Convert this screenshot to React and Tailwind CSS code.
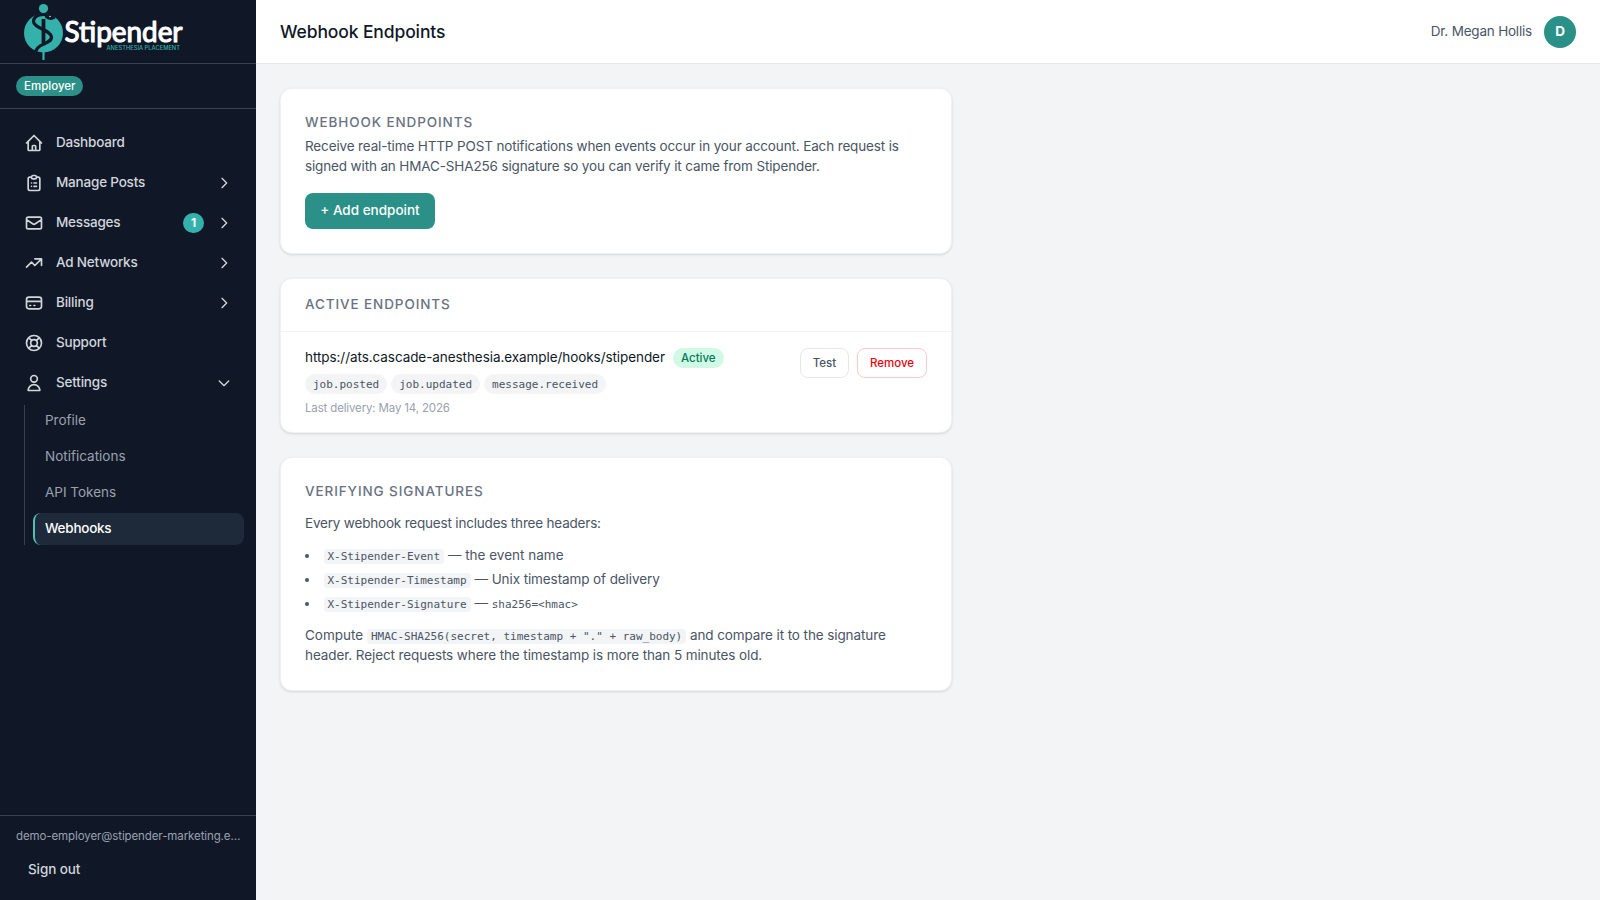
import React from 'react'

const icons = {
  home: 'M3 12l2-2m0 0l7-7 7 7M5 10v10a1 1 0 001 1h3m10-11l2 2m-2-2v10a1 1 0 01-1 1h-3m-6 0a1 1 0 001-1v-4a1 1 0 011-1h2a1 1 0 011 1v4a1 1 0 001 1m-6 0h6',
  clipboard:
    'M9 5H7a2 2 0 00-2 2v12a2 2 0 002 2h10a2 2 0 002-2V7a2 2 0 00-2-2h-2M9 5a2 2 0 002 2h2a2 2 0 002-2M9 5a2 2 0 012-2h2a2 2 0 012 2m-3 7h3m-3 4h3m-6-4h.01M9 16h.01',
  mail: 'M3 8l7.89 5.26a2 2 0 002.22 0L21 8M5 19h14a2 2 0 002-2V7a2 2 0 00-2-2H5a2 2 0 00-2 2v10a2 2 0 002 2z',
  trending: 'M13 7h8m0 0v8m0-8l-8 8-4-4-6 6',
  card: 'M3 10h18M7 15h1m4 0h1m-7 4h12a3 3 0 003-3V8a3 3 0 00-3-3H6a3 3 0 00-3 3v8a3 3 0 003 3z',
  support:
    'M18.364 5.636l-3.536 3.536m0 5.656l3.536 3.536M9.172 9.172L5.636 5.636m3.536 9.192l-3.536 3.536M21 12a9 9 0 11-18 0 9 9 0 0118 0zm-5 0a4 4 0 11-8 0 4 4 0 018 0z',
  user: 'M16 7a4 4 0 11-8 0 4 4 0 018 0zM12 14a7 7 0 00-7 7h14a7 7 0 00-7-7z',
  right: 'M9 5l7 7-7 7',
  down: 'M19 9l-7 7-7-7',
}

const navItems = [
  { label: 'Dashboard', icon: 'home' },
  { label: 'Manage Posts', icon: 'clipboard', chevron: 'right' },
  { label: 'Messages', icon: 'mail', chevron: 'right', badge: 1 },
  { label: 'Ad Networks', icon: 'trending', chevron: 'right' },
  { label: 'Billing', icon: 'card', chevron: 'right' },
  { label: 'Support', icon: 'support' },
  { label: 'Settings', icon: 'user', chevron: 'down' },
]

const settingsItems = ['Profile', 'Notifications', 'API Tokens', 'Webhooks']

const events = ['job.posted', 'job.updated', 'message.received']

function Icon({ name, className }) {
  return (
    <svg className={className} viewBox="0 0 24 24" fill="none" stroke="currentColor" strokeWidth="2" strokeLinecap="round" strokeLinejoin="round">
      <path d={icons[name]} />
    </svg>
  )
}

function Logo() {
  return (
    <svg className="w-[168px] h-[63px]" viewBox="20 0 168 63">
      <circle cx="43.5" cy="33" r="19.5" fill="#34b1aa" />
      <circle cx="43.5" cy="8.5" r="4.6" fill="#34b1aa" />
      <path d="M43.5 12v3M43.5 51v9" stroke="#34b1aa" strokeWidth="2.2" />
      <path d="M43.5 19v24" stroke="#111827" strokeWidth="3.8" />
      {/* snake */}
      <path
        d="M49 15.500c-7-2.500-15.500 0-15.500 6c0 6.500 17.500 8.500 18 15.500c.3 5-7.500 6.500-11.500 9c-2 1.300-3 2.500-4 4.500"
        fill="none"
        stroke="#111827"
        strokeWidth="3.2"
        strokeLinecap="round"
      />
      <path d="M45 14c4-1 9 0 10.500 4.300c-3.500 2.400-7.500 2-10.500-.8z" fill="#111827" />
      <circle cx="50" cy="16.500" r=".7" fill="#fff" />
      <text
        x="64.500"
        y="41.500"
        textLength="118"
        lengthAdjust="spacingAndGlyphs"
        fill="#fff"
        stroke="#fff"
        strokeWidth="1.1"
        strokeLinejoin="round"
        fontSize="28.500"
        fontWeight="400"
        fontFamily="Lato, sans-serif"
      >
        Stipender
      </text>
      <text x="106.500" y="49.500" textLength="73.500" lengthAdjust="spacingAndGlyphs" fill="#34b1aa" fontSize="5.6" fontWeight="500" fontFamily="Inter, sans-serif">
        ANESTHESIA PLACEMENT
      </text>
    </svg>
  )
}

function NavItem({ label, icon, chevron, badge }) {
  return (
    <a className="flex items-center gap-3 h-9 px-3 rounded-lg text-[13.5px] tracking-[-0.2px] font-medium text-gray-300">
      <Icon name={icon} className="w-5 h-5 shrink-0" />
      <span className="flex-1 pb-0.5">{label}</span>
      {badge && (
        <span className="flex items-center justify-center w-[21px] h-5 rounded-full bg-[#34b1aa] text-white text-xs font-bold">{badge}</span>
      )}
      {chevron && <Icon name={chevron} className="w-4 h-4 shrink-0" />}
    </a>
  )
}

function Sidebar() {
  return (
    <aside className="w-64 shrink-0 h-full flex flex-col bg-gray-900">
      <div className="h-16 px-5 border-b border-gray-700">
        <Logo />
      </div>
      <div className="px-4 py-3 border-b border-gray-700 flex">
        <span className="h-5 px-2 rounded-full bg-[#2b9088] text-white text-[11.5px] leading-5 font-medium">Employer</span>
      </div>
      <nav className="flex-1 px-3 py-4">
        <div className="space-y-1">
          {navItems.map((item) => (
            <NavItem key={item.label} {...item} />
          ))}
        </div>
        <div className="mt-1 ml-3 pl-2 border-l border-gray-700 space-y-1">
          {settingsItems.map((label) => (
            <a
              key={label}
              className={`flex items-center h-8 pb-0.5 rounded-lg text-[13.5px] ${
                label === 'Webhooks'
                  ? 'border-l-2 border-[#4fc1b8] pl-2.5 bg-gray-800 text-white font-medium tracking-[-0.25px]'
                  : 'pl-3 text-gray-400'
              }`}
            >
              {label}
            </a>
          ))}
        </div>
      </nav>
      <div className="px-4 py-3 border-t border-gray-700">
        <p className="mb-2 whitespace-nowrap text-[11.5px] leading-4 tracking-[-0.1px] text-gray-400">demo-employer@stipender-marketing.e…</p>
        <button className="flex items-center h-9 px-3 pb-0.5 text-[13.5px] tracking-[-0.1px] font-medium text-gray-300">Sign out</button>
      </div>
    </aside>
  )
}

function CardTitle({ children }) {
  return <h2 className="-mt-px text-[13.5px] leading-5 font-medium tracking-[0.9px] uppercase text-gray-500">{children}</h2>
}

function Code({ children }) {
  return <code className="px-1 py-px rounded bg-gray-100 font-['DejaVu_Sans_Mono',monospace] text-[11px] leading-none">{children}</code>
}

export default function App() {
  return (
    <div className="flex h-screen overflow-hidden bg-gray-100 font-[Inter,sans-serif]">
      <Sidebar />
      <div className="flex-1 flex flex-col">
        <header className="h-16 px-6 flex items-center justify-between bg-white border-b border-gray-200">
          <h1 className="pt-0.5 text-[17.5px] tracking-[-0.12px] font-medium text-gray-900">Webhook Endpoints</h1>
          <div className="flex items-center gap-3">
            <span className="text-[13.5px] tracking-[-0.2px] text-gray-600">Dr. Megan Hollis</span>
            <span className="w-8 h-8 rounded-full flex items-center justify-center bg-[#2b9088] text-white text-[13.5px] font-bold">D</span>
          </div>
        </header>

        <main className="p-6">
          <div className="max-w-2xl space-y-6">
            <section className="p-6 bg-white border border-gray-200/60 rounded-xl shadow-sm">
              <CardTitle>Webhook Endpoints</CardTitle>
              <p className="mt-1 mb-[17px] text-[13.5px] leading-5 tracking-[-0.14px] text-gray-600">
                Receive real-time HTTP POST notifications when events occur in your account. Each request is
                <br />
                signed with an HMAC-SHA256 signature so you can verify it came from Stipender.
              </p>
              <button className="flex items-center justify-center w-[130px] h-9 pb-0.5 rounded-lg bg-[#2b9088] text-white text-[13.5px] font-medium">
                + Add endpoint
              </button>
            </section>

            <section className="bg-white border border-gray-200/60 rounded-xl shadow-sm">
              <div className="px-6 pt-4 pb-[17px] border-b border-gray-100">
                <CardTitle>Active Endpoints</CardTitle>
              </div>
              <div className="px-6 py-4 flex items-start justify-between">
                <div>
                  <div className="flex items-center gap-2">
                    <span className="pb-0.5 text-[13.5px] leading-[18px] tracking-[-0.07px] text-gray-900">
                      https://ats.cascade-anesthesia.example/hooks/stipender
                    </span>
                    <span className="h-5 px-2 rounded-full bg-emerald-100 text-emerald-700 text-[11.5px] leading-5 font-medium">Active</span>
                  </div>
                  <div className="mt-1.5 flex gap-1">
                    {events.map((event) => (
                      <span key={event} className="h-5 px-2 rounded-full bg-gray-100 text-gray-600 text-[11px] leading-[21px] font-['DejaVu_Sans_Mono',monospace]">
                        {event}
                      </span>
                    ))}
                  </div>
                  <p className="mt-1.5 text-[11.5px] leading-4 tracking-[-0.15px] text-gray-400">Last delivery: May 14, 2026</p>
                </div>
                <div className="flex gap-2 text-[11.5px] leading-4 font-medium">
                  <button className="w-[49px] py-1.5 rounded-lg border border-gray-200 text-gray-600">Test</button>
                  <button className="w-[70px] py-1.5 rounded-lg border border-red-200 text-red-600">Remove</button>
                </div>
              </div>
            </section>

            <section className="px-6 pt-6 pb-[25px] bg-white border border-gray-200/60 rounded-xl shadow-sm text-[13.5px] leading-5 text-gray-600">
              <CardTitle>Verifying Signatures</CardTitle>
              <p className="mt-3 tracking-[-0.19px]">Every webhook request includes three headers:</p>
              <ul className="mt-3 space-y-1 list-disc list-inside">
                <li>
                  <Code>X-Stipender-Event</Code> — the event name
                </li>
                <li>
                  <Code>X-Stipender-Timestamp</Code> — <span className="tracking-[-0.1px]">Unix timestamp of delivery</span>
                </li>
                <li>
                  <Code>X-Stipender-Signature</Code> —{' '}
                  <code className="font-['DejaVu_Sans_Mono',monospace] text-[11px] leading-none">sha256=&lt;hmac&gt;</code>
                </li>
              </ul>
              <p className="mt-3">
                Compute <Code>HMAC-SHA256(secret, timestamp + "." + raw_body)</Code>
                <span className="tracking-[-0.1px]"> and compare it to the signature</span>
                <br />
                <span className="tracking-[-0.1px]">header. Reject requests where the timestamp is more than 5 minutes old.</span>
              </p>
            </section>
          </div>
        </main>
      </div>
    </div>
  )
}
